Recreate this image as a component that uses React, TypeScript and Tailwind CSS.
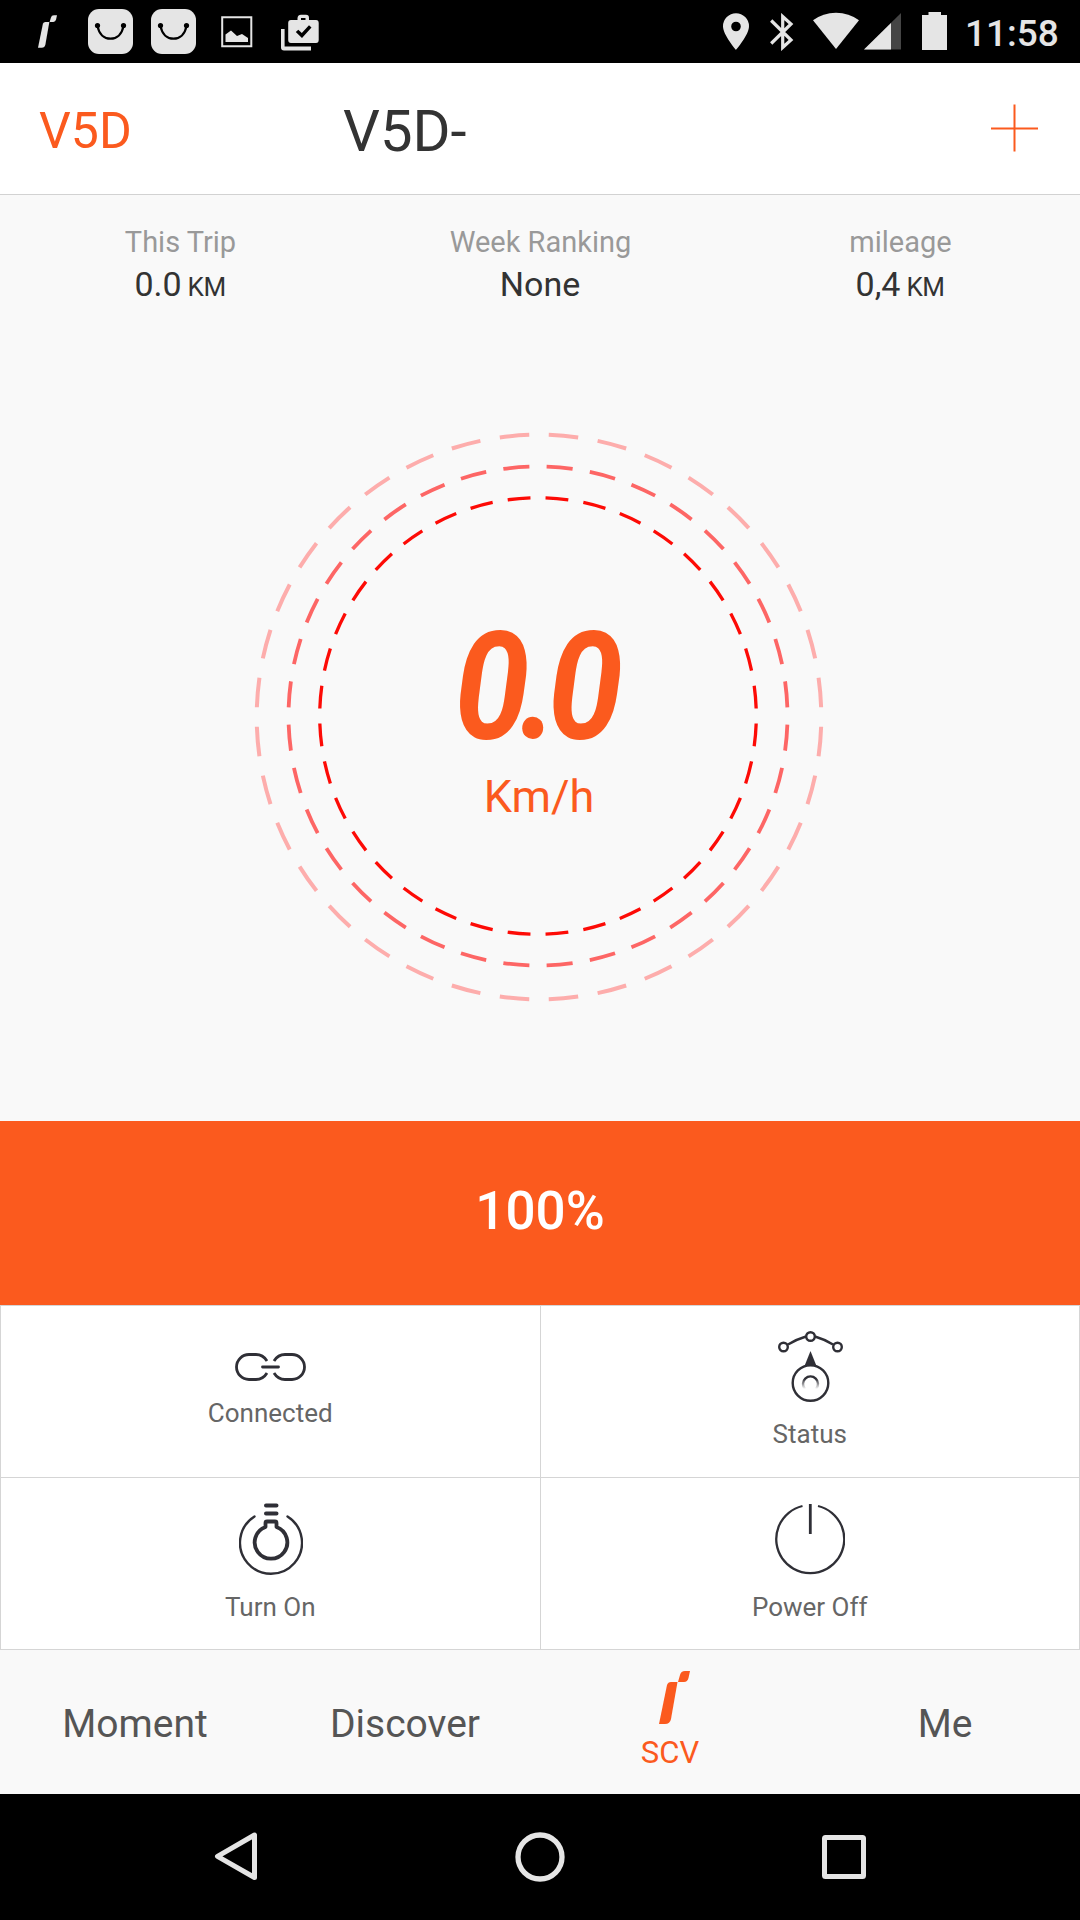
import type { ReactNode } from "react";

const rings = [
  { cx: 0, cy: -1, r: 282.3, width: 4, color: "#fdadac" },
  { cx: -1, cy: -2, r: 249.5, width: 3.8, color: "#fd6665" },
  { cx: -1, cy: -2, r: 218.3, width: 3.3, color: "#fd0b06" },
];

function BrandMark({ className }: { className: string }) {
  return (
    <svg viewBox="0 0 31 53" fill="currentColor" className={className}>
      <path d="M8 14Q9 11 12 11H18.5L12 48Q11 53 6 53H0Z" />
      <path d="M21 4Q22 0 26 0H31L29.5 7Q28.5 11 25 11H19Z" />
    </svg>
  );
}

function BagIcon({ className }: { className: string }) {
  return (
    <svg viewBox="0 0 45 45" className={className}>
      <rect width="45" height="45" rx="11" fill="#e5e5e5" />
      <path d="M9.5 17C11 25 16 29.7 22.5 29.7S34 25 35.5 17" fill="none" stroke="#000" strokeWidth="2.2" />
      <circle cx="9.5" cy="16.5" r="2.6" />
      <circle cx="35.5" cy="16.5" r="2.6" />
    </svg>
  );
}

function StatusBar() {
  return (
    <div className="flex h-[63px] bg-black text-[#e5e5e5]">
      <BrandMark className="mt-[15px] ml-[38px] h-[33px] w-[19px]" />
      <BagIcon className="mt-[9px] ml-[31px] size-[45px]" />
      <BagIcon className="mt-[9px] ml-[18px] size-[45px]" />
      <svg viewBox="0 0 32 32" className="mt-[16px] ml-[25px] size-8">
        <path d="M1.2 1.2H30.3V30.3H1.2Z" fill="none" stroke="currentColor" strokeWidth="2" />
        <path d="M4.5 26V18.5L10 14.5L16 20L21 18L27 22V26Z" fill="currentColor" />
      </svg>
      <svg viewBox="0 0 38 37" fill="currentColor" className="mt-[14px] ml-[28px] h-[37px] w-[38px]">
        <path d="M0 15H3.6V32.6H30V36.4H3Q0 36.4 0 33.5Z" />
        <path
          fillRule="evenodd"
          d="M10 6H16.5V4Q17 .7 20 .7H25Q28 .7 28 4V6H35Q37.7 6 37.7 9V26Q37.7 29 35 29H10Q7.2 29 7.2 26V9Q7.2 6 10 6ZM20 4V6H24.5V4ZM14.8 18L21 24L30.5 13.5L28 11.3L20.8 18.9L17.3 15.8Z"
        />
      </svg>

      <svg viewBox="0 0 26 37" fill="currentColor" className="mt-[13px] ml-auto h-[37px] w-[26px]">
        <path
          fillRule="evenodd"
          d="M13 .3A13 13 0 0 0 0 13.3C0 22 13 37 13 37S26 22 26 13.3A13 13 0 0 0 13 .3ZM13 8.7A4.8 4.8 0 1 1 13 18.3A4.8 4.8 0 1 1 13 8.7Z"
        />
      </svg>
      <svg viewBox="0 0 24 38" className="mt-[13px] ml-[21px] h-[38px] w-6">
        <path
          d="M1.2 7.5L21 27L12.7 34.5V3.5L21 11L1.2 30.5"
          fill="none"
          stroke="currentColor"
          strokeWidth="3.2"
        />
      </svg>
      <svg viewBox="0 0 46 37" fill="currentColor" className="mt-[12px] ml-[19px] h-[37px] w-[46px]">
        <path d="M0 8.3Q10 .7 23 .7T46 8.3L23 37Z" />
      </svg>
      <svg viewBox="0 0 37 37" fill="currentColor" className="mt-[13px] ml-[5px] size-[37px]">
        <path d="M37 0V36.5H0Z" opacity=".3" />
        <path d="M27 10V36.5H0Z" />
      </svg>
      <svg viewBox="0 0 25 38" fill="currentColor" className="mt-[12px] ml-[21px] h-[38px] w-[25px]">
        <path d="M6.5 0H19V3H25V38H0V3H6.5Z" />
      </svg>
      <span className="mt-[7px] mr-[21px] ml-[18px] w-[94px] text-[37px] leading-[54px] font-medium">11:58</span>
    </div>
  );
}

function Stat({ label, value, unit }: { label: string; value: string; unit?: string }) {
  return (
    <div className="flex h-[86px] flex-col items-center">
      <span className="pl-px text-[29px] leading-[41px] text-[#999]">{label}</span>
      <span className="text-[34px] leading-[42px] text-[#333]">
        {value}
        {unit && <span className="ml-[6px] text-[26px] tracking-[-0.5px]">{unit}</span>}
      </span>
    </div>
  );
}

function Gauge() {
  return (
    <div className="relative mt-[124px] ml-[253px] h-[572px] w-[572px]">
      <svg viewBox="-286 -286 572 572" className="absolute inset-0 size-full">
        {rings.map((ring) => (
          <circle
            key={ring.r}
            cx={ring.cx}
            cy={ring.cy}
            r={ring.r}
            fill="none"
            stroke={ring.color}
            strokeWidth={ring.width}
            pathLength={360}
            strokeDasharray="6 4"
            strokeDashoffset={-2}
          />
        ))}
      </svg>
      <div className="flex flex-col items-center pt-[180px] text-[#fb5a1e]">
        <span className="scale-x-[0.9] pr-[11px] text-[150px] leading-[150px] font-bold tracking-[-11px] italic">
          0.0
        </span>
        <span className="mt-[5px] text-[45px] leading-[60px]">Km/h</span>
      </div>
    </div>
  );
}

function Action({ label, className, children }: { label: string; className: string; children: ReactNode }) {
  return (
    <button className={`flex flex-col items-center bg-white ${className}`}>
      {children}
      <span className="text-[26px] leading-8 text-[#666]">{label}</span>
    </button>
  );
}

function Actions() {
  return (
    <div className="grid h-[345px] grid-cols-2 grid-rows-2 gap-px border border-[#d5d5d5] bg-[#d5d5d5] text-[#2f2f36]">
      <Action label="Connected" className="pt-[47px]">
        <svg viewBox="0 0 71 28" fill="none" stroke="currentColor" strokeWidth="2.8" className="mb-4 h-7 w-[71px]">
          <path d="M32 8Q28 1.5 21 1.5H14A12.5 12.5 0 0 0 14 26.5H21Q28 26.5 32 20" />
          <path d="M39 8Q43 1.5 50 1.5H57A12.5 12.5 0 0 1 57 26.5H50Q43 26.5 39 20" />
          <path d="M27.5 14H43.5" strokeLinecap="round" />
        </svg>
      </Action>
      <Action label="Status" className="pt-[25px]">
        <svg viewBox="0 0 65 71" fill="none" stroke="currentColor" strokeWidth="2.4" className="mb-4 ml-[2px] h-[71px] w-[65px]">
          <defs>
            <linearGradient id="dial" x1="0" y1="0" x2="0" y2="1">
              <stop offset=".2" stopColor="currentColor" />
              <stop offset="1" stopColor="currentColor" stopOpacity="0" />
            </linearGradient>
          </defs>
          <path d="M10 13.5Q18 8.5 28 5.5M37 5.5Q47 8.5 55 13.5" />
          <circle cx="5.5" cy="16" r="4.3" />
          <circle cx="32.5" cy="5.5" r="4.3" />
          <circle cx="59.5" cy="16" r="4.3" />
          <path d="M32.5 20L38.5 35H26.5Z" fill="currentColor" stroke="none" />
          <circle cx="32.5" cy="52" r="17.8" />
          <path d="M27 58A7.5 7.5 0 1 1 38 58" stroke="url(#dial)" />
        </svg>
      </Action>
      <Action label="Turn On" className="pt-[25px]">
        <svg viewBox="0 0 64 72" fill="none" stroke="currentColor" strokeLinecap="round" className="mb-4 ml-[2px] h-[72px] w-16">
          <path d="M15.5 13.5A31 31 0 1 0 48.5 13.5" strokeWidth="2.4" />
          <path d="M27 2.5H37.5M27 10.5H37.5" strokeWidth="4" />
          <path
            d="M26.5 24V20Q26.5 18.5 28 18.5H36Q37.5 18.5 37.5 20V24A16.3 16.3 0 1 1 26.5 24Z"
            strokeWidth="3.8"
            strokeLinejoin="round"
          />
        </svg>
      </Action>
      <Action label="Power Off" className="pt-[26px]">
        <svg viewBox="0 0 70 71" fill="none" stroke="currentColor" className="mb-4 h-[71px] w-[70px]">
          <path d="M27.5 2A34 34 0 1 0 43 2" strokeWidth="2.3" />
          <path d="M35.3 0V30" strokeWidth="2.8" />
        </svg>
      </Action>
    </div>
  );
}

function TabBar() {
  return (
    <div className="grid h-36 grid-cols-4 bg-[#f9f9f9] text-center text-[39px] leading-[148px] text-[#555]">
      <span>Moment</span>
      <span>Discover</span>
      <div className="flex flex-col items-center pt-[21px] pr-[10px] text-[#fb5a1e]">
        <BrandMark className="ml-2 h-[53px] w-[31px]" />
        <span className="mt-[10px] text-[31px] leading-[38px]">SCV</span>
      </div>
      <span>Me</span>
    </div>
  );
}

function NavBar() {
  return (
    <div className="flex h-[126px] items-start bg-black pt-[37px]">
      <svg viewBox="0 0 44 52" className="ml-[214px] h-[52px] w-11">
        <path d="M40.5 4V46.5L3.5 25.3Z" fill="none" stroke="#e5e5e5" strokeWidth="5" strokeLinejoin="round" />
      </svg>
      <svg viewBox="0 0 50 52" className="ml-[257px] h-[52px] w-[50px]">
        <circle cx="25" cy="26" r="22" fill="none" stroke="#e5e5e5" strokeWidth="5.3" />
      </svg>
      <svg viewBox="0 0 46 52" className="ml-[256px] h-[52px] w-[46px]">
        <rect x="3.5" y="6.5" width="39" height="39" rx="1" fill="none" stroke="#e5e5e5" strokeWidth="5" />
      </svg>
    </div>
  );
}

export default function App() {
  return (
    <div className="flex h-[1920px] w-[1080px] flex-col overflow-hidden bg-[#f9f9f9] font-['Roboto',sans-serif]">
      <StatusBar />
      <header className="flex h-[132px] items-center border-b border-[#d2d2d2] bg-white">
        <span className="ml-[39px] w-[304px] pt-[6px] text-[50px] text-[#fb5a1e]">V5D</span>
        <h1 className="pt-[5px] text-[58px] text-[#333]">V5D-</h1>
        <svg viewBox="0 0 48 48" className="mr-[42px] mb-[2px] ml-auto size-12">
          <path d="M24.5 .5V47.5M1 24.5H48" stroke="#fb5a1e" strokeWidth="2" />
        </svg>
      </header>
      <section className="grid grid-cols-3 pt-[27px]">
        <Stat label="This Trip" value="0.0" unit="KM" />
        <Stat label="Week Ranking" value="None" />
        <Stat label="mileage" value="0,4" unit="KM" />
      </section>
      <Gauge />
      <div className="mt-auto flex h-[184px] items-center justify-center bg-[#fb5a1e] pb-[2px] text-[53px] font-medium text-white">
        100%
      </div>
      <Actions />
      <TabBar />
      <NavBar />
    </div>
  );
}
